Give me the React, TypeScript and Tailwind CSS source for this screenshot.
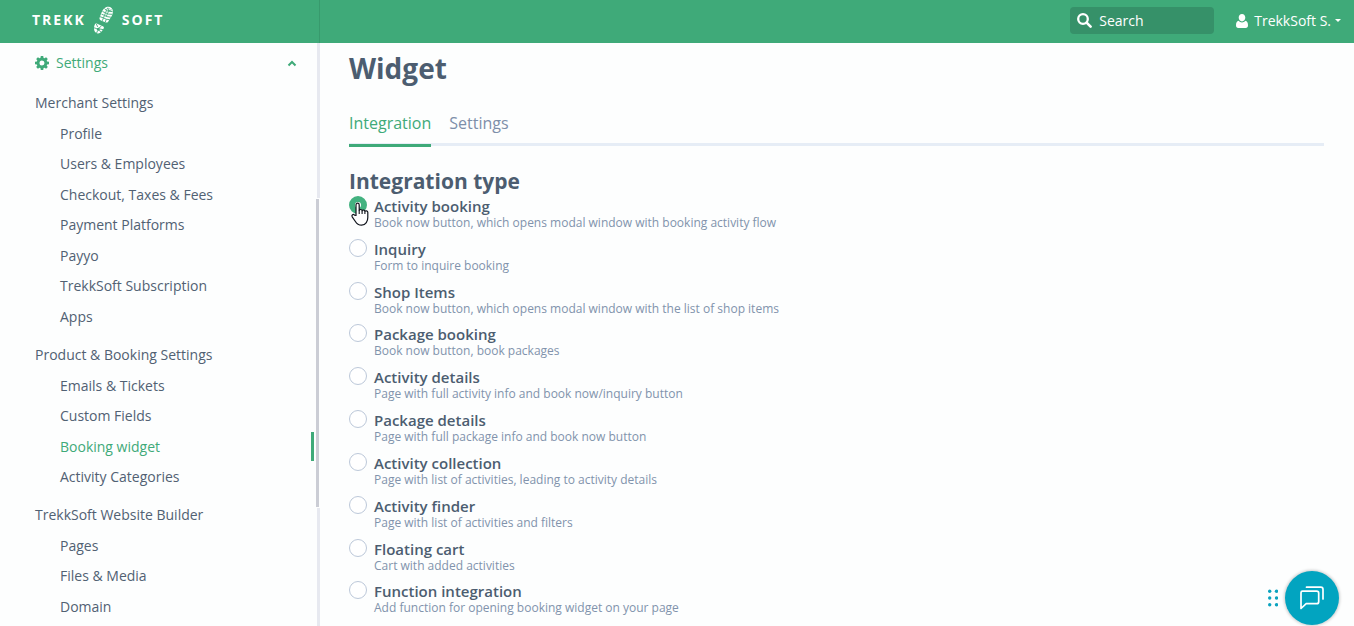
import { useState } from 'react';

const menuGroups = [
  {
    title: 'Merchant Settings',
    items: ['Profile', 'Users & Employees', 'Checkout, Taxes & Fees', 'Payment Platforms', 'Payyo', 'TrekkSoft Subscription', 'Apps'],
  },
  {
    title: 'Product & Booking Settings',
    items: ['Emails & Tickets', 'Custom Fields', 'Booking widget', 'Activity Categories'],
  },
  {
    title: 'TrekkSoft Website Builder',
    items: ['Pages', 'Files & Media', 'Domain'],
  },
];

const integrationTypes = [
  { id: 'activity-booking', name: 'Activity booking', text: 'Book now button, which opens modal window with booking activity flow' },
  { id: 'inquiry', name: 'Inquiry', text: 'Form to inquire booking' },
  { id: 'shop-items', name: 'Shop Items', text: 'Book now button, which opens modal window with the list of shop items' },
  { id: 'package-booking', name: 'Package booking', text: 'Book now button, book packages' },
  { id: 'activity-details', name: 'Activity details', text: 'Page with full activity info and book now/inquiry button' },
  { id: 'package-details', name: 'Package details', text: 'Page with full package info and book now button' },
  { id: 'activity-collection', name: 'Activity collection', text: 'Page with list of activities, leading to activity details' },
  { id: 'activity-finder', name: 'Activity finder', text: 'Page with list of activities and filters' },
  { id: 'floating-cart', name: 'Floating cart', text: 'Cart with added activities' },
  { id: 'function-integration', name: 'Function integration', text: 'Add function for opening booking widget on your page' },
];

function BootPrint() {
  return (
    <svg viewBox="1 0 20 28" className="h-7 w-5" aria-hidden="true">
      <path
        fill="#fff"
        d="M13 1.2c3.4-1.4 7 .4 6.900 4.300-.1 4.400-3 6.800-4.400 9.800-.5 1-1.400 1.500-2.600 1.100l-5-2c-1.300-.6-1.700-1.500-1.200-2.800C8 8.200 9.300 2.700 13 1.200z"
      />
      <path fill="#fff" d="M1.600 18.900c.5-1.200 1.400-1.600 2.600-1.100l5.600 2.400c1.100.5 1.400 1.300.8 2.400-1.400 2.700-3.300 5.200-6 4.800-3.600-.6-4.300-5.200-3-8.500z" />
      <g stroke="#3faa79" strokeWidth="0.9" fill="none">
        <path d="M11.500 2.500l1.800 2 1.500-2.800M16 2l-.6 3 3.200-1.200M9.500 5.500l3 1.300 1-2.300 2 .8 4 .2M8.500 8.200l3 1.200 1-2.600 2.800 1.300 3.900.2M7 10.700l3.500 1.200 1-2.500 2.600 1.200 3.700.6M10.500 11.900l2.800 1.300 3.200.5M9.300 14.800l1.200-2.900M12.200 16.200l1.100-3M15.500 5.300l-1.200 2.800-1.100 2.500" />
        <path d="M1 21.800l2.800.8M3.400 18l1.200 2.900M8.500 20l-2.300 1.800M10 23.600l-3-.6M3.600 27l1-2.400M7.800 26.200l-1.500-2" />
      </g>
      <path fill="#3faa79" d="M3.900 22.200l2.300-.8.900 1.900-1.700 1.800-1.700-1z" />
    </svg>
  );
}

function GearIcon() {
  return (
    <svg viewBox="0 0 14 14" className="size-3.5" aria-hidden="true">
      <path
        fill="currentColor"
        fillRule="evenodd"
        d="M5.800 0h2.400l.4 1.900.9.400L11.100 1.200l1.700 1.700-1.100 1.600.4.900 1.900.4v2.400l-1.900.4-.4.900 1.100 1.600-1.700 1.700-1.600-1.100-.9.400-.4 1.900H5.800l-.4-1.900-.9-.4-1.600 1.100-1.700-1.700 1.100-1.600-.4-.9L0 8.200V5.800l1.900-.4.400-.9L1.200 2.900l1.700-1.700 1.600 1.100.9-.4zM7 4.500a2.500 2.500 0 1 0 0 5 2.500 2.500 0 0 0 0-5z"
      />
    </svg>
  );
}

function Header() {
  return (
    <header className="flex h-[43px] shrink-0 bg-[#3faa79] text-white">
      <div className="w-80 shrink-0 border-r border-[#389a6d] pl-8">
        <a href="#" className="flex h-10 w-fit items-center gap-2 text-sm font-bold tracking-[2px]">
          <span>TREKK</span>
          <BootPrint />
          <span>SOFT</span>
        </a>
      </div>
      <div className="flex flex-1 items-center justify-end pr-[13px] pb-0.5">
        <label className="flex h-[27px] w-36 items-center rounded bg-[#369169] pl-[7px]">
          <svg viewBox="0 0 15 15" className="mr-[7px] size-[15px] shrink-0" aria-hidden="true">
            <circle cx="6" cy="6" r="4.800" fill="none" stroke="#fff" strokeWidth="2.300" />
            <path d="M9.600 9.600l4 4" stroke="#fff" strokeWidth="2.600" strokeLinecap="round" />
          </svg>
          <input type="text" aria-label="Search" placeholder="Search" className="w-full min-w-0 bg-transparent text-sm placeholder:text-white focus:outline-none" />
        </label>
        <button type="button" className="ml-[22px] flex items-center text-sm">
          <svg viewBox="0 0 12 14" className="mr-1.5 h-3.5 w-3" aria-hidden="true">
            <path
              fill="#fff"
              d="M6 0c2 0 3.300 1.600 3.300 3.600C9.300 5.900 7.900 7.500 6 7.500S2.700 5.900 2.700 3.600C2.700 1.600 4 0 6 0zM2.700 6.700C3.500 7.800 4.600 8.400 6 8.400s2.500-.6 3.300-1.700C11.200 7 12 8.800 12 11.200 12 12.900 11.200 14 9.700 14H2.300C.8 14 0 12.900 0 11.200 0 8.800.8 7 2.700 6.700z"
            />
          </svg>
          TrekkSoft S.
          <span className="ml-1 border-x-3 border-t-3 border-x-transparent border-t-white" />
        </button>
      </div>
    </header>
  );
}

function Sidebar() {
  return (
    <aside className="relative w-80 shrink-0 border-r-3 border-[#e7e9f0]">
      <button type="button" className="flex h-10 w-full items-center pr-5 pl-[35px] text-sm text-[#3faa79]">
        <GearIcon />
        <span className="ml-[7px]">Settings</span>
        <svg viewBox="0 0 10 7" className="ml-auto h-[7px] w-2.5" aria-hidden="true">
          <path d="M1.500 5.500L5 2l3.500 3.500" fill="none" stroke="currentColor" strokeWidth="2" />
        </svg>
      </button>
      <nav className="mt-1 flex flex-col gap-[7px] text-sm text-[#516173]">
        {menuGroups.map((group) => (
          <section key={group.title}>
            <h2 className="flex h-[31px] items-center pl-[35px]">{group.title}</h2>
            <ul>
              {group.items.map((item) => (
                <li key={item} className="flex h-[30px] items-center odd:h-[31px]">
                  <a
                    href="#"
                    className={
                      item === 'Booking widget'
                        ? 'mr-[3px] flex h-[29px] flex-1 items-center border-r-3 border-[#3faa79] pl-[60px] text-[#3faa79]'
                        : 'flex-1 pl-[60px]'
                    }
                  >
                    {item}
                  </a>
                </li>
              ))}
            </ul>
          </section>
        ))}
      </nav>
      {/* scroll thumb, laid over the track */}
      <div className="absolute top-[155px] -right-[3px] h-[310px] w-1 border-y border-r border-[#fdfefe] bg-[#cbcdd5]" />
    </aside>
  );
}

function HandCursor() {
  return (
    <svg viewBox="0 0 18 24" className="pointer-events-none absolute top-1.5 left-0.5 h-6 w-[18px]" aria-hidden="true">
      <path
        fill="#fff"
        stroke="#10141c"
        strokeWidth="1.200"
        strokeLinejoin="round"
        d="M5 13.500V3c0-2.500 3.200-2.500 3.200 0v5.500c.3-1.400 2.800-1.300 2.900.3.400-1.200 2.700-1 2.800.6.500-1 2.900-.8 2.900.9v5.200c0 3.500-1.900 7.700-6.200 7.700-3.600 0-5-1.600-6.200-3.700L1.200 14.800c-.9-1.900 1.100-3 2.300-1.700z"
      />
      <path d="M8.200 8.500V12M11.100 9v3M13.900 9.800V12" stroke="#10141c" strokeWidth="1.100" />
    </svg>
  );
}

function ChatLauncher() {
  return (
    <div className="fixed right-[15px] bottom-px flex items-center gap-[7px]">
      <svg viewBox="0 0 10 18" className="h-[18px] w-2.5" fill="#0ba3bf" aria-hidden="true">
        <circle cx="1.700" cy="2.200" r="1.700" />
        <circle cx="8.500" cy="2.200" r="1.700" />
        <circle cx="1.700" cy="9" r="1.700" />
        <circle cx="8.500" cy="9" r="1.700" />
        <circle cx="1.700" cy="15.800" r="1.700" />
        <circle cx="8.500" cy="15.800" r="1.700" />
      </svg>
      <button type="button" aria-label="Open chat" className="flex size-[54px] items-center justify-center rounded-full bg-[#02a4c0] shadow-[0_0_3px_1px_#0003]">
        <svg viewBox="0 0 26 26" className="size-[26px]" fill="none" stroke="#fff" strokeWidth="1.700" strokeLinejoin="round" strokeLinecap="round" aria-hidden="true">
          <path d="M3.500 6.200h14.200q2 0 2 2v8.500q0 2-2 2H7.200L2 23.500V7.700q0-1.500 1.500-1.500z" />
          <path d="M7.500 2.200h14.200q2.300 0 2.300 2.300v9.500" />
        </svg>
      </button>
    </div>
  );
}

function App() {
  const [selectedType, setSelectedType] = useState('activity-booking');

  return (
    <div className="flex h-screen flex-col overflow-hidden bg-[#fdfefe] font-['Open_Sans',sans-serif]">
      <Header />
      <div className="flex min-h-0 flex-1">
        <Sidebar />
        <main className="min-w-0 flex-1 pr-[30px] pl-[29px] text-[#4c5d70]">
          <h1 className="mt-[5px] text-[28px] leading-10 font-bold">Widget</h1>
          <div className="mt-4 flex gap-[18px] border-b-3 border-[#e6edf6] text-base text-[#7d8fa9]">
            <a href="#" className="-mb-1 border-b-3 border-[#3faa79] pt-[7px] pb-[9px] text-[#3faa79]">Integration</a>
            <a href="#" className="pt-[7px]">Settings</a>
          </div>
          <h2 className="mt-5 text-[21px] leading-[30px] font-bold">Integration type</h2>
          <ul>
            {integrationTypes.map((type) => (
              <li key={type.id} className="relative flex h-[43px] nth-[6n+3]:h-[42px]">
                <input
                  type="radio"
                  id={type.id}
                  name="integration-type"
                  checked={selectedType === type.id}
                  onChange={() => setSelectedType(type.id)}
                  className="mr-[7px] size-[18px] shrink-0 appearance-none rounded-full border border-[#bcc8d9] bg-white checked:border-[6px] checked:border-[#43b280]"
                />
                <label htmlFor={type.id} className="block">
                  <span className="block text-[15px] leading-5 font-semibold">{type.name}</span>
                  <span className="block text-xs leading-3.5 text-[#8193ac]">{type.text}</span>
                </label>
                {type.id === 'activity-booking' && <HandCursor />}
              </li>
            ))}
          </ul>
        </main>
      </div>
      <ChatLauncher />
    </div>
  );
}

export default App;
